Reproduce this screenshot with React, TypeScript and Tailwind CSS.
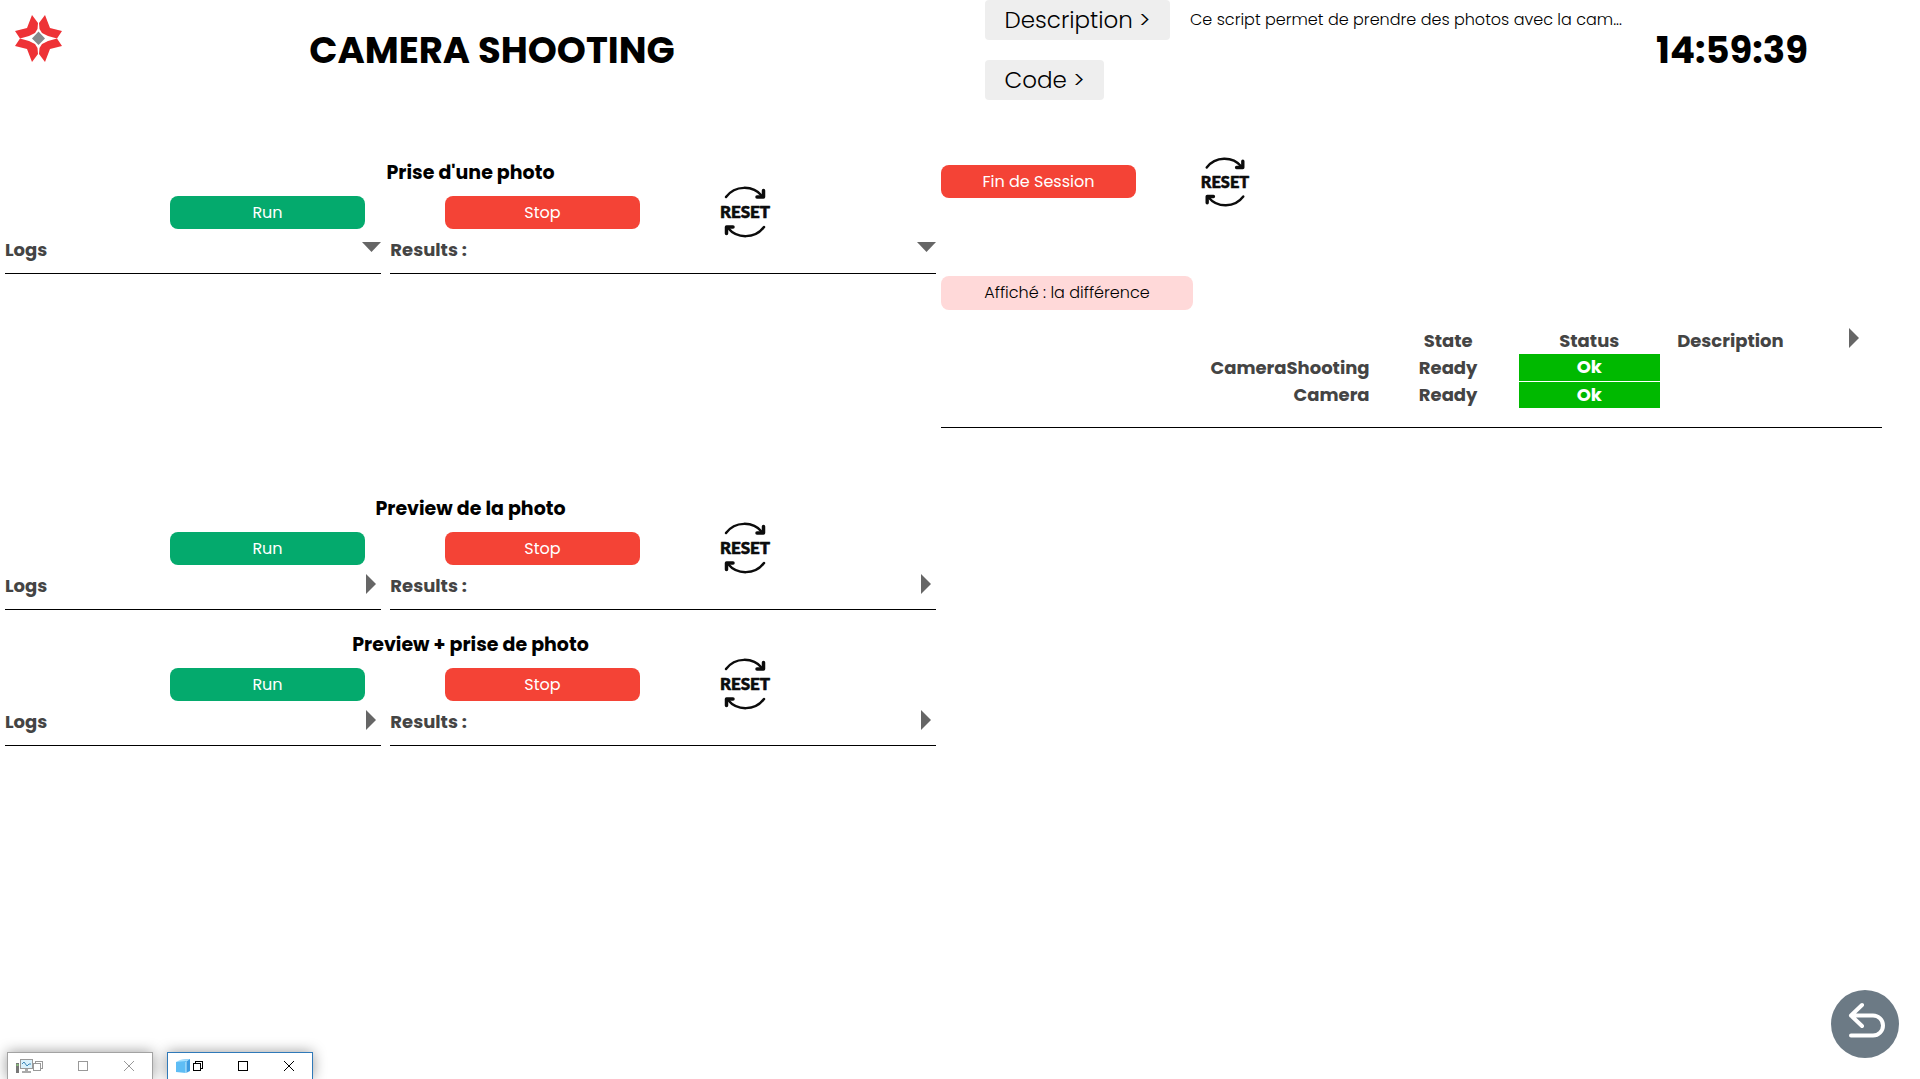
import { useState } from "react";

function Logo() {
  return (
    <svg viewBox="0 0 48 48" className="m-[15px] size-12 shrink-0" fill="#ee3236" role="img" aria-label="Logo">
      <path d="M17 0L23 8L22.500 14L20 18L14 21L5 23.500L0 16L12 13Z" />
      <path d="M17 0L23 8L22.500 14L20 18L14 21L5 23.500L0 16L12 13Z" transform="matrix(-1 0 0 1 47 0)" />
      <path d="M17 0L23 8L22.500 14L20 18L14 21L5 23.500L0 16L12 13Z" transform="matrix(1 0 0 -1 0 47)" />
      <path d="M17 0L23 8L22.500 14L20 18L14 21L5 23.500L0 16L12 13Z" transform="matrix(-1 0 0 -1 47 47)" />
      <path d="M23.500 16.500L30 23.500L23.500 30L17 23.500Z" fill="#85898c" />
    </svg>
  );
}

function ResetButton({ className }: { className: string }) {
  return (
    <button type="button" aria-label="Reset" className={className}>
      <svg viewBox="-2 -2 54 54" className="size-full overflow-visible" fill="none" stroke="#0c0c0c" strokeWidth="2.500" strokeLinecap="round" strokeLinejoin="round">
        <path d="M6 10C15-2 33-2 42 9" />
        <path d="M37 10H43.500V3.500" strokeWidth="3.500" />
        <path d="M44 40C35 52 17 52 8 41" />
        <path d="M13 40H6.500V46.500" strokeWidth="3.500" />
        <text x="25" y="31" textAnchor="middle" fontSize="17" fontWeight="900" fontFamily="Lato, 'Open Sans', sans-serif" fill="#0c0c0c" strokeWidth="0.600">
          RESET
        </text>
      </svg>
    </button>
  );
}

function Arrow({ open }: { open: boolean }) {
  return open ? (
    <svg viewBox="0 0 19 10" className="mt-1 h-[10px] w-[19px]" fill="#666">
      <path d="M0 0H19L9.500 10Z" />
    </svg>
  ) : (
    <svg viewBox="0 0 10 20" className="mr-[5px] h-5 w-[10px]" fill="#666">
      <path d="M0 0L10 10L0 20Z" />
    </svg>
  );
}

function Panel({ label, startOpen }: { label: string; startOpen: boolean }) {
  const [open, setOpen] = useState(startOpen);
  return (
    <div>
      <button
        type="button"
        aria-expanded={open}
        onClick={() => setOpen(!open)}
        className="flex h-9 w-full items-start justify-between border-b border-black text-left text-lg leading-6 font-bold text-[#444]"
      >
        <span>{label}</span>
        <Arrow open={open} />
      </button>
      {open && <div className="h-[200px]" />}
    </div>
  );
}

function Task({ title, open }: { title: string; open: boolean }) {
  return (
    <section className="pb-[22px]">
      <h2 className="text-center text-[19px] leading-[26px] font-bold">{title}</h2>
      <div className="flex h-10 items-start pt-[10px] pl-[170px]">
        <button type="button" className="h-[33px] w-[195px] rounded-lg bg-[#04aa6d] text-base text-white">
          Run
        </button>
        <button type="button" className="ml-20 h-[33px] w-[195px] rounded-lg bg-[#f44336] text-base text-white">
          Stop
        </button>
        <ResetButton className="-mt-[11px] ml-[78px] size-[54px] shrink-0" />
      </div>
      <div className="mt-3 grid grid-cols-[40fr_58fr] gap-x-[9px] px-[5px]">
        <Panel label="Logs" startOpen={open} />
        <Panel label="Results :" startOpen={open} />
      </div>
    </section>
  );
}

const rows = [
  { name: "CameraShooting", state: "Ready", status: "Ok" },
  { name: "Camera", state: "Ready", status: "Ok" },
];

function StatusTable() {
  return (
    <div className="relative border-b border-black pb-[18px]">
      <table className="w-full table-fixed text-center text-lg leading-[26px] font-bold text-[#444]">
        <colgroup>
          <col />
          <col className="w-[15%]" />
          <col className="w-[15%]" />
          <col className="w-[15%]" />
          <col className="w-[81px]" />
        </colgroup>
        <thead>
          <tr className="h-[27px]">
            <td />
            <th scope="col">State</th>
            <th scope="col">Status</th>
            <th scope="col">Description</th>
            <td />
          </tr>
        </thead>
        <tbody>
          {rows.map((row) => (
            <tr key={row.name} className="h-[27px]">
              <th scope="row" className="pr-2 text-right">{row.name}</th>
              <td>{row.state}</td>
              <td className="border-b border-white bg-[#00b900] text-white">{row.status}</td>
              <td />
              <td />
            </tr>
          ))}
        </tbody>
      </table>
      <button type="button" aria-label="Expand table" className="absolute top-px right-[23px]">
        <svg viewBox="0 0 10 20" className="h-5 w-[10px]" fill="#666">
          <path d="M0 0L10 10L0 20Z" />
        </svg>
      </button>
    </div>
  );
}

function MonitorIcon() {
  return (
    <svg viewBox="0 0 17 16" className="h-4 w-[17px]">
      <rect x="0" y="5" width="3" height="10" fill="#777" />
      <rect x="0.500" y="6" width="2" height="2" fill="#8bc37c" />
      <rect x="4.500" y="1.500" width="12" height="9" fill="#d9f0fb" stroke="#999" />
      <path d="M6 6L8 4L11 8L13 6H15" fill="none" stroke="#3d87b8" />
      <path d="M9 11H12V13H15V15H6V13H9Z" fill="#aaa" />
    </svg>
  );
}

function CubeIcon() {
  return (
    <svg viewBox="0 0 15 15" className="h-[15px] w-[15px]">
      <path d="M4 1L14 0V12L10 14Z" fill="#3d9be0" />
      <path d="M0 3L4 1L14 0L10 3Z" fill="#a5e0ff" />
      <path d="M0 3L10 2V14L0 13Z" fill="#5ebdf5" />
      <path d="M10 3V14" stroke="#c7edff" />
    </svg>
  );
}

function MiniWindow({ active }: { active: boolean }) {
  const look = active ? "border-[#2f79b9] text-black" : "border-[#a3a3a3] text-[#999]";
  return (
    <div className={`flex h-[27px] w-[146px] items-center border border-b-0 bg-white pl-2 shadow-[0_0_14px_rgba(0,0,0,0.4)] ${look}`}>
      <span className="w-[17px]">{active ? <CubeIcon /> : <MonitorIcon />}</span>
      <button type="button" aria-label="Restore">
        <svg viewBox="0 0 10 10" className="size-[10px]" fill="none" stroke="currentColor" shapeRendering="crispEdges">
          <path d="M0.500 2.500H7.500V9.500H0.500ZM2.500 2.500V0.500H9.500V7.500H7.500" />
        </svg>
      </button>
      <button type="button" aria-label="Maximize" className="ml-[35px]">
        <svg viewBox="0 0 10 10" className="size-[10px]" fill="none" stroke="currentColor" shapeRendering="crispEdges">
          <path d="M0.500 0.500H9.500V9.500H0.500Z" />
        </svg>
      </button>
      <button type="button" aria-label="Close" className="ml-9">
        <svg viewBox="0 0 10 10" className="size-[10px]" fill="none" stroke="currentColor">
          <path d="M0 0L10 10M10 0L0 10" />
        </svg>
      </button>
    </div>
  );
}

export default function App() {
  return (
    <div className="relative min-h-screen overflow-hidden bg-white pr-[38px] font-['Poppins','Inter',sans-serif] text-black">
      <header className="flex h-[160px] items-start">
        <Logo />
        <h1 className="w-[828px] pt-[26px] text-center text-[37px] leading-[48px] font-bold">CAMERA SHOOTING</h1>
        <div className="ml-[79px] min-w-0 flex-1">
          <div className="flex items-center">
            <button type="button" className="h-10 w-[185px] shrink-0 rounded bg-[#eee] text-[23px] font-light">Description &gt;</button>
            <p className="ml-5 text-base font-light whitespace-nowrap">Ce script permet de prendre des photos avec la cam...</p>
          </div>
          <button type="button" className="mt-5 h-10 w-[119px] rounded bg-[#eee] text-[23px] font-light">Code &gt;</button>
        </div>
        <time className="w-[236px] pt-[26px] pr-16 text-center text-[37px] leading-[48px] font-bold">14:59:39</time>
      </header>

      <main className="grid grid-cols-2">
        <div>
          <Task title="Prise d'une photo" open />
          <Task title="Preview de la photo" open={false} />
          <Task title="Preview + prise de photo" open={false} />
        </div>
        <div>
          <div className="flex h-[38px] items-start pt-[5px]">
            <button type="button" className="h-[33px] w-[195px] rounded-lg bg-[#f44336] text-base text-white">Fin de Session</button>
            <ResetButton className="-mt-[9px] ml-[63px] size-[52px] shrink-0" />
          </div>
          <button type="button" className="mt-[78px] block h-[34px] w-[252px] rounded-lg bg-[#ffd9d9] text-base font-light">
            Affiché : la différence
          </button>
          <div className="mt-[17px]">
            <StatusTable />
          </div>
        </div>
      </main>

      <button type="button" aria-label="Back" className="absolute right-[21px] bottom-[21px] size-[68px] rounded-full bg-[#6c7a85]">
        <svg viewBox="0 0 68 68" className="size-full" fill="none" stroke="#fff" strokeWidth="4" strokeLinecap="round" strokeLinejoin="round">
          <path d="M31 15L20 25.500L31 36M20 25.500H42A10 10 0 0 1 42 45.500H20" />
        </svg>
      </button>

      <div className="absolute bottom-0 left-[7px] flex gap-[14px]">
        <MiniWindow active={false} />
        <MiniWindow active />
      </div>
    </div>
  );
}
